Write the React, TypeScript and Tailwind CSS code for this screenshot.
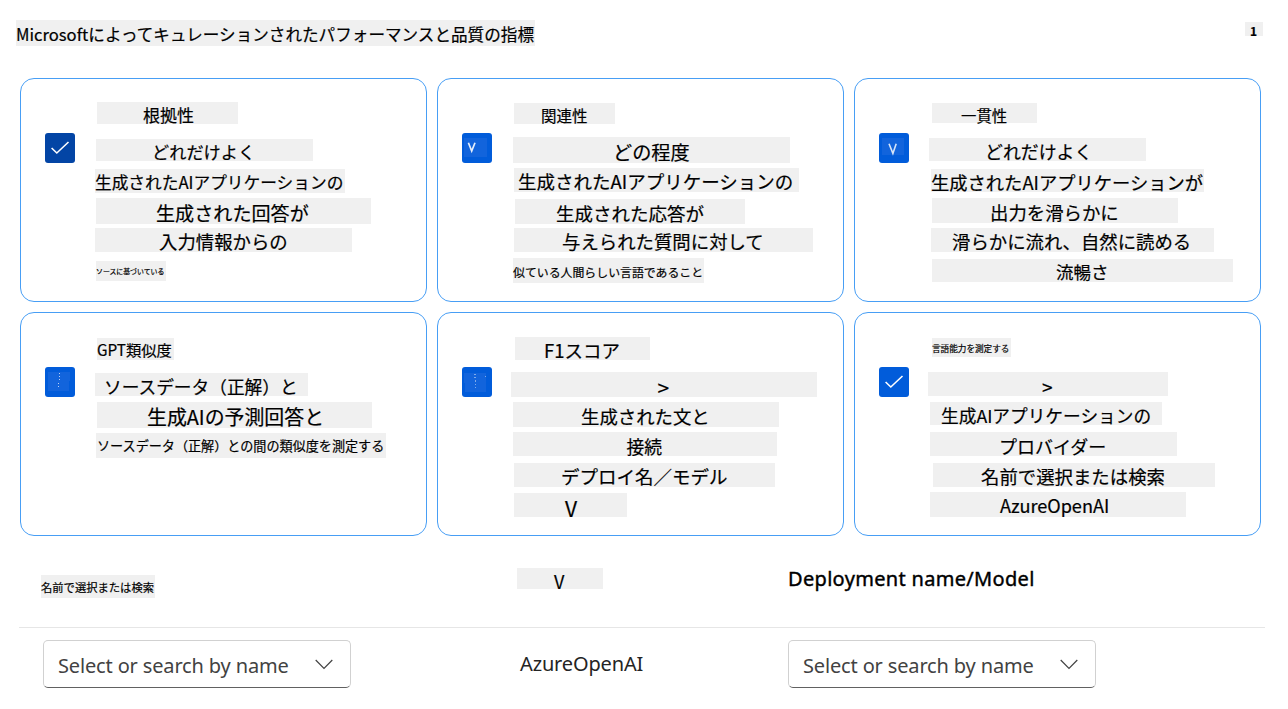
import type { ReactNode } from "react";

type Line = { text: string; strip: string };
type Mark = "check" | "vLeft" | "vCenter" | "dots" | "dotsWide";
type Metric = { id: string; mark: Mark; tone: string; lines: Line[] };

const BLUE = "bg-[#015cda]";
const NAVY = "bg-[#0345a5]";

const metrics: Metric[] = [
  {
    id: "groundedness",
    mark: "check",
    tone: NAVY,
    lines: [
      { text: "根拠性", strip: "mt-[23px] ml-[7px] h-[22px] w-[141px] pl-[46px] text-[17px] leading-[26px]" },
      { text: "どれだけよく", strip: "mt-[15px] ml-[6px] h-[22px] w-[217px] pl-[56px] text-[17.2px] leading-[26px]" },
      { text: "生成されたAIアプリケーションの", strip: "mt-[8px] ml-[5px] h-[24px] w-[250px] text-[16.7px] leading-[27px]" },
      { text: "生成された回答が", strip: "mt-[5px] ml-[6px] h-[26px] w-[275px] pl-[60px] text-[19.1px] leading-[31px]" },
      { text: "入力情報からの", strip: "mt-[4px] ml-[5px] h-[24px] w-[257px] pl-[64px] text-[18.4px] leading-[27px]" },
      { text: "ソースに基づいている", strip: "mt-[9px] ml-[6px] h-[20px] w-[70px] text-[6.9px] leading-[20px]" },
    ],
  },
  {
    id: "relevance",
    mark: "vLeft",
    tone: BLUE,
    lines: [
      { text: "関連性", strip: "mt-[24px] ml-[7px] h-[21px] w-[101px] pl-[27px] text-[15.5px] leading-[24px]" },
      { text: "どの程度", strip: "mt-[13px] ml-[6px] h-[26px] w-[277px] pl-[100px] text-[19.2px] leading-[31px]" },
      { text: "生成されたAIアプリケーションの", strip: "mt-[5px] ml-[7px] h-[24px] w-[285px] pl-[4px] text-[18.5px] leading-[27px]" },
      { text: "生成された応答が", strip: "mt-[7px] ml-[8px] h-[25px] w-[230px] pl-[41px] text-[18.5px] leading-[28px]" },
      { text: "与えられた質問に対して", strip: "mt-[4px] ml-[7px] h-[24px] w-[299px] pl-[48px] text-[18.4px] leading-[26px]" },
      { text: "似ている人間らしい言語であること", strip: "mt-[6px] ml-[6px] h-[25px] w-[191px] text-[11.9px] leading-[28px]" },
    ],
  },
  {
    id: "coherence",
    mark: "vCenter",
    tone: BLUE,
    lines: [
      { text: "一貫性", strip: "mt-[24px] ml-[8px] h-[20px] w-[105px] pl-[29px] text-[15.4px] leading-[24px]" },
      { text: "どれだけよく", strip: "mt-[15px] ml-[5px] h-[23px] w-[217px] pl-[56px] text-[17.9px] leading-[26px]" },
      { text: "生成されたAIアプリケーションが", strip: "mt-[8px] ml-[7px] h-[23px] w-[273px] text-[18.3px] leading-[27px]" },
      { text: "出力を滑らかに", strip: "mt-[6px] ml-[8px] h-[25px] w-[246px] pl-[58px] text-[18.4px] leading-[28px]" },
      { text: "滑らかに流れ、自然に読める", strip: "mt-[5px] ml-[7px] h-[24px] w-[283px] pl-[21px] text-[18.4px] leading-[26px]" },
      { text: "流暢さ", strip: "mt-[7px] ml-[8px] h-[23px] w-[301px] pl-[124px] text-[17.5px] leading-[26px]" },
    ],
  },
  {
    id: "similarity",
    mark: "dots",
    tone: BLUE,
    lines: [
      { text: "GPT類似度", strip: "mt-[25px] ml-[7px] h-[22px] w-[77px] text-[15.3px] leading-[23px]" },
      { text: "ソースデータ（正解）と", strip: "mt-[13px] ml-[5px] h-[23px] w-[213px] pl-[9px] text-[17.7px] leading-[26px]" },
      { text: "生成AIの予測回答と", strip: "mt-[6px] ml-[7px] h-[26px] w-[275px] pl-[50px] text-[19.9px] leading-[29px]" },
      { text: "ソースデータ（正解）との間の類似度を測定する", strip: "mt-[5px] ml-[6px] h-[25px] w-[290px] pl-[1px] text-[13.1px] leading-[25px]" },
    ],
  },
  {
    id: "f1-score",
    mark: "dotsWide",
    tone: BLUE,
    lines: [
      { text: "F1スコア", strip: "mt-[24px] ml-[8px] h-[23px] w-[135px] pl-[29px] text-[18.5px] leading-[27px]" },
      { text: ">", strip: "mt-[12px] ml-[4px] h-[25px] w-[306px] pl-[146.5px] text-[21px] leading-[31px]" },
      { text: "生成された文と", strip: "mt-[5px] ml-[6px] h-[25px] w-[266px] pl-[68px] text-[18.4px] leading-[28px]" },
      { text: "接続", strip: "mt-[5px] ml-[6px] h-[24px] w-[264px] pl-[113.5px] text-[17.8px] leading-[28px]" },
      { text: "デプロイ名／モデル", strip: "mt-[7px] ml-[7px] h-[24px] w-[261px] pl-[47px] text-[18.5px] leading-[26px]" },
      { text: "V", strip: "mt-[6px] ml-[7px] h-[24px] w-[113px] pl-[51px] text-[21px] leading-[30px]" },
    ],
  },
  {
    id: "fluency",
    mark: "check",
    tone: BLUE,
    lines: [
      { text: "言語能力を測定する", strip: "mt-[25px] ml-[8px] h-[19px] w-[79px] text-[8.6px] leading-[20px]" },
      { text: ">", strip: "mt-[15px] ml-[4px] h-[24px] w-[240px] pl-[114px] text-[19px] leading-[30px]" },
      { text: "生成AIアプリケーションの", strip: "mt-[6px] ml-[6px] h-[23px] w-[232px] pl-[11px] text-[17.7px] leading-[27px]" },
      { text: "プロバイダー", strip: "mt-[7px] ml-[6px] h-[24px] w-[247px] pl-[69px] text-[18px] leading-[28px]" },
      { text: "名前で選択または検索", strip: "mt-[7px] ml-[9px] h-[24px] w-[282px] pl-[48px] text-[18.4px] leading-[27px]" },
      { text: "AzureOpenAI", strip: "mt-[5px] ml-[6px] h-[25px] w-[256px] pl-[70px] text-[18.1px] leading-[27px]" },
    ],
  },
];

function Strip({ className, children }: { className: string; children: ReactNode }) {
  return (
    <div className={`bg-[#f0f0f0] whitespace-nowrap [-webkit-text-stroke:0.2px_black] ${className}`}>{children}</div>
  );
}

function Checkbox({ mark, tone }: { mark: Mark; tone: string }) {
  return (
    <span className={`mt-[54px] block size-[30px] shrink-0 rounded-[3px] ${tone}`}>
      <svg viewBox="0 0 30 30" className="size-[30px]" fill="none">
        {mark === "check" && <path d="M6.6 15 11.8 20 23.5 9" stroke="#fff" strokeWidth="1.6" />}
        {mark === "vLeft" && (
          <>
            <path d="M2 5H25V24H2Z" fill="#1264dc" />
            <path d="M6.4 9.8 9.7 18 13 9.8" stroke="#e6effb" strokeWidth="1.7" />
          </>
        )}
        {mark === "vCenter" && (
          <>
            <path d="M3 5H25V22H3Z" fill="#1264dc" />
            <path d="M10 10.8 13.9 20.4 17.2 10.8" stroke="#d6e4f8" strokeWidth="1.6" />
          </>
        )}
        {mark === "dots" && (
          <>
            <path d="M3 5H25V14H24V24H3Z" fill="#1264dc" />
            <path d="M14 6h1v1h-1zM14 9h1v1h-1zM14 12h1v1h-1zM13 16h1v1h-1zM13 19h1v1h-1z" fill="#b9d0f3" />
          </>
        )}
        {mark === "dotsWide" && (
          <>
            <path d="M2 6H24V25H3V16H2Z" fill="#1264dc" />
            <path d="M12 7h2v1h-2zM12 10h2v1h-2zM13 13h1v2h-1zM13 17h1v1h-1zM13 20h1v1h-1zM23 9h1v1h-1z" fill="#7fabea" />
          </>
        )}
      </svg>
    </span>
  );
}

function MetricCard({ metric }: { metric: Metric }) {
  return (
    <section className="flex h-[224px] gap-[15px] rounded-[14px] border border-[#479ef5] pl-[24px]">
      <Checkbox mark={metric.mark} tone={metric.tone} />
      <div className="flex flex-col items-start">
        {metric.lines.map((line) => (
          <Strip key={line.text} className={line.strip}>
            {line.text}
          </Strip>
        ))}
      </div>
    </section>
  );
}

function SelectBox() {
  return (
    <button className="flex h-[48px] w-[308px] items-center rounded-[5px] border border-[#d1d1d1] border-b-[#616161] pl-[14px] text-left font-['Noto_Sans',sans-serif] text-[#424242]">
      <span className="w-[257px] pt-[4px] text-[20px] tracking-[-0.15px] whitespace-nowrap">Select or search by name</span>
      <svg viewBox="0 0 18 11" className="h-[11px] w-[18px] shrink-0" fill="none">
        <path d="M.7 1 9 9.3 17.3 1" stroke="#424242" strokeWidth="1.2" />
      </svg>
    </button>
  );
}

export default function App() {
  return (
    <main
      lang="ja"
      className="h-[709px] w-[1288px] overflow-hidden bg-white font-['Noto_Sans_CJK_JP',sans-serif] text-black"
    >
      <header className="flex h-[78px] items-start justify-between pt-[20px] pr-[25px] pl-[16px]">
        <Strip className="h-[26px] w-[519px] text-[16.6px] leading-[28px]">
          Microsoftによってキュレーションされたパフォーマンスと品質の指標
        </Strip>
        <Strip className="mt-[2px] h-[14px] w-[18px] pl-[5px] text-[12px] leading-[18px] font-bold">1</Strip>
      </header>

      <div className="grid w-[1261px] grid-cols-[407px_407px_407px] gap-[10px] pl-[20px]">
        {metrics.map((metric) => (
          <MetricCard key={metric.id} metric={metric} />
        ))}
      </div>

      <div className="ml-[19px] grid h-[92px] w-[1246px] grid-cols-[479px_290px_1fr] items-start border-b border-[#e6e6e6]">
        <Strip className="mt-[39px] ml-[22px] h-[23px] w-[114px] text-[11.3px] leading-[25px]">
          名前で選択または検索
        </Strip>
        <Strip className="mt-[32px] ml-[19px] h-[21px] w-[86px] pl-[37px] text-[18px] leading-[26px]">V</Strip>
        <h2 className="mt-[29px] font-['Noto_Sans',sans-serif] text-[20px] leading-[28px] font-normal tracking-[0.32px] whitespace-nowrap [-webkit-text-stroke:0.4px_black]">
          Deployment name/Model
        </h2>
      </div>

      <div className="ml-[43px] grid grid-cols-[477px_268px_1fr] pt-[12px]">
        <SelectBox />
        <span className="pt-[10px] font-['Noto_Sans',sans-serif] text-[20px] leading-[28px] tracking-[-0.15px] text-[#242424]">
          AzureOpenAI
        </span>
        <SelectBox />
      </div>
    </main>
  );
}
